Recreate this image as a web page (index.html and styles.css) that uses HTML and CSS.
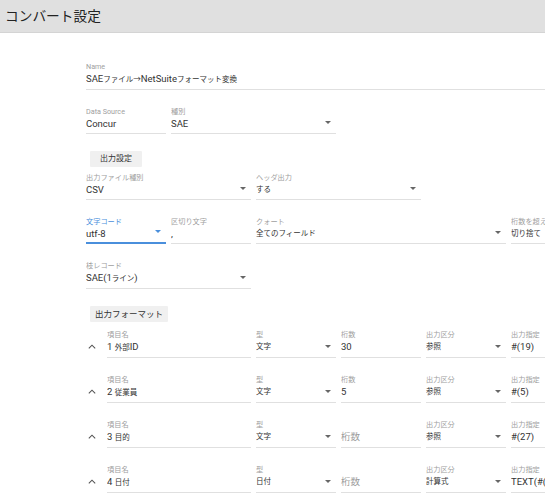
FILE: index.html
```html
<!DOCTYPE html>
<html lang="ja">
<head>
<meta charset="utf-8">
<title>コンバート設定</title>
<link rel="stylesheet" href="styles.css">
</head>
<body>
<header class="topbar"><h1 class="title">コンバート設定</h1></header>
<main class="content">
  <div class="grid row">
    <div class="field span6"><div class="lbl">Name</div><div class="val">SAE<span class="j">ファイル→</span>NetSuite<span class="j">フォーマット変換</span></div></div>
  </div>
  <div class="grid row">
    <div class="field"><div class="lbl">Data Source</div><div class="val">Concur</div></div>
    <div class="field span2 select"><div class="lbl">種別</div><div class="val">SAE</div></div>
  </div>
  <div class="btn">出力設定</div>
  <div class="grid row">
    <div class="field span2 select"><div class="lbl">出力ファイル種別</div><div class="val">CSV</div></div>
    <div class="field span2 select"><div class="lbl">ヘッダ出力</div><div class="val j">する</div></div>
  </div>
  <div class="grid row">
    <div class="field select focus"><div class="lbl">文字コード</div><div class="val">utf-8</div></div>
    <div class="field"><div class="lbl">区切り文字</div><div class="val">,</div></div>
    <div class="field span3 select"><div class="lbl">クォート</div><div class="val j">全てのフィールド</div></div>
    <div class="field"><div class="lbl">桁数を超えた場合</div><div class="val j">切り捨て</div></div>
  </div>
  <div class="grid row row-gap">
    <div class="field span2 select"><div class="lbl">枝レコード</div><div class="val">SAE(1<span class="j">ライン</span>)</div></div>
  </div>
  <div class="btn btn-format">出力フォーマット</div>

  <div class="grid row fmt">
    <div class="namecell span2">
      <svg class="chev" width="8" height="5" viewBox="0 0 8 5"><polyline points="0.8,4.4 4,1.2 7.2,4.4" fill="none" stroke="#555" stroke-width="1.1"/></svg>
      <div class="field grow"><div class="lbl">項目名</div><div class="val">1 <span class="j">外部</span>ID</div></div>
    </div>
    <div class="field select"><div class="lbl">型</div><div class="val j">文字</div></div>
    <div class="field"><div class="lbl">桁数</div><div class="val">30</div></div>
    <div class="field select"><div class="lbl">出力区分</div><div class="val j">参照</div></div>
    <div class="field"><div class="lbl">出力指定</div><div class="val">#(19)</div></div>
  </div>
  <div class="grid row fmt">
    <div class="namecell span2">
      <svg class="chev" width="8" height="5" viewBox="0 0 8 5"><polyline points="0.8,4.4 4,1.2 7.2,4.4" fill="none" stroke="#555" stroke-width="1.1"/></svg>
      <div class="field grow"><div class="lbl">項目名</div><div class="val">2 <span class="j">従業員</span></div></div>
    </div>
    <div class="field select"><div class="lbl">型</div><div class="val j">文字</div></div>
    <div class="field"><div class="lbl">桁数</div><div class="val">5</div></div>
    <div class="field select"><div class="lbl">出力区分</div><div class="val j">参照</div></div>
    <div class="field"><div class="lbl">出力指定</div><div class="val">#(5)</div></div>
  </div>
  <div class="grid row fmt">
    <div class="namecell span2">
      <svg class="chev" width="8" height="5" viewBox="0 0 8 5"><polyline points="0.8,4.4 4,1.2 7.2,4.4" fill="none" stroke="#555" stroke-width="1.1"/></svg>
      <div class="field grow"><div class="lbl">項目名</div><div class="val">3 <span class="j">目的</span></div></div>
    </div>
    <div class="field select"><div class="lbl">型</div><div class="val j">文字</div></div>
    <div class="field"><div class="lbl">&nbsp;</div><div class="val ph">桁数</div></div>
    <div class="field select"><div class="lbl">出力区分</div><div class="val j">参照</div></div>
    <div class="field"><div class="lbl">出力指定</div><div class="val">#(27)</div></div>
  </div>
  <div class="grid row fmt">
    <div class="namecell span2">
      <svg class="chev" width="8" height="5" viewBox="0 0 8 5"><polyline points="0.8,4.4 4,1.2 7.2,4.4" fill="none" stroke="#555" stroke-width="1.1"/></svg>
      <div class="field grow"><div class="lbl">項目名</div><div class="val">4 <span class="j">日付</span></div></div>
    </div>
    <div class="field select"><div class="lbl">型</div><div class="val j">日付</div></div>
    <div class="field"><div class="lbl">&nbsp;</div><div class="val ph">桁数</div></div>
    <div class="field select"><div class="lbl">出力区分</div><div class="val j">計算式</div></div>
    <div class="field"><div class="lbl">出力指定</div><div class="val">TEXT(#(64),"yyyy/mm/dd")</div></div>
  </div>
</main>
</body>
</html>
```

FILE: styles.css
```css
html, body {
  margin: 0;
  padding: 0;
  background: #fff;
  overflow: hidden;
  width: 545px;
  height: 498px;
}
body {
  font-family: Roboto, "Noto Sans CJK JP", sans-serif;
  color: #333;
}
.topbar {
  height: 32px;
  background: #e0e0e0;
  border-bottom: 1px solid #d4d4d4;
}
.title {
  margin: 0;
  padding-left: 5px;
  font-size: 13.7px;
  font-weight: 400;
  line-height: 32px;
  color: #222;
}
.content {
  padding: 29px 0 0 86px;
  width: 600px;
}
.grid {
  display: grid;
  grid-template-columns: repeat(6, 80px);
  column-gap: 5px;
}
.row {
  margin-bottom: 17px;
}
.row-gap {
  margin-top: 2px;
}
.span2 { grid-column: span 2; }
.span3 { grid-column: span 3; }
.span6 { grid-column: span 6; }
.field {
  position: relative;
  border-bottom: 1px solid #e0e0e0;
  padding-bottom: 2px;
  min-width: 0;
}
.lbl {
  font-size: 7.2px;
  line-height: 10px;
  color: #a0a0a0;
  white-space: nowrap;
  overflow: hidden;
}
.val {
  font-size: 9.5px;
  line-height: 14px;
  color: #333;
  white-space: nowrap;
  overflow: hidden;
}
.j, .val.j {
  font-size: 7.5px;
}
.val.ph {
  font-size: 9.5px;
  color: #9a9a9a;
}
.select::after {
  content: "";
  position: absolute;
  right: 5px;
  bottom: 9px;
  border-left: 3px solid transparent;
  border-right: 3px solid transparent;
  border-top: 3px solid #666;
}
.focus {
  border-bottom: 2px solid #4a8fdc;
  padding-bottom: 1px;
}
.focus .lbl { color: #4a8fdc; }
.focus::after { border-top-color: #4a8fdc; }
.btn {
  display: block;
  width: max-content;
  margin-left: 4px;
  height: 16px;
  line-height: 16px;
  min-width: 42px;
  padding: 0 5px;
  text-align: center;
  background: #f0f0f0;
  font-size: 8px;
  color: #333;
  border-radius: 1px;
}
.btn-format { font-size: 8.5px; }
.btn + .grid { margin-top: 6px; }
.btn-format + .grid { margin-top: 8px; }
.namecell {
  display: flex;
  align-items: flex-end;
}
.chev {
  flex: none;
  width: 8px;
  margin: 0 11px 9px 2px;
}
.grow { flex: 1; }
```
